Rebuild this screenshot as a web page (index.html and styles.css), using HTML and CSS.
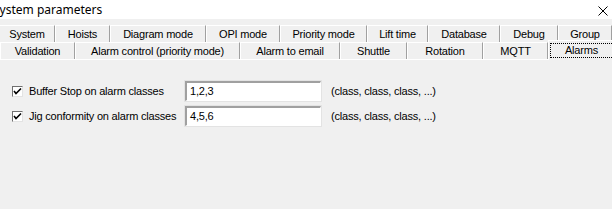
FILE: index.html
```html
<!DOCTYPE html>
<html>
    <head>
        <title>System parameters</title>
        <link rel="stylesheet" href="styles.css">
    </head>
    <body>
        <div class="titlebar">
            <span class="title">System parameters</span>
            <svg class="close" width="10" height="10" viewBox="0 0 10 10">
                <path d="M0.5 0.5 L9.5 9.5 M9.5 0.5 L0.5 9.5" stroke="#000" stroke-width="1" fill="none"/>
            </svg>
        </div>
        <div class="dialog">
            <div class="tabs">
                <div class="tab_row">
                    <div class="tab w55">System</div>
                    <div class="tab w55">Hoists</div>
                    <div class="tab w96">Diagram mode</div>
                    <div class="tab w74">OPI mode</div>
                    <div class="tab w87">Priority mode</div>
                    <div class="tab w61">Lift time</div>
                    <div class="tab w72">Database</div>
                    <div class="tab w58">Debug</div>
                    <div class="tab w54">Group</div>
                </div>
                <div class="tab_row">
                    <div class="tab w75">Validation</div>
                    <div class="tab w165">Alarm control (priority mode)</div>
                    <div class="tab w100">Alarm to email</div>
                    <div class="tab w67">Shuttle</div>
                    <div class="tab w76">Rotation</div>
                    <div class="tab w65">MQTT</div>
                    <div class="tab tab_sel w64"><span class="focus">Alarms</span></div>
                </div>
            </div>
            <div class="panel">
                <div class="field_row">
                    <label class="check_label"><span class="checkbox"><svg width="9" height="9" viewBox="0 0 9 9"><path d="M1 4 L3 6.5 L8 1.5" stroke="#000" stroke-width="1.6" fill="none"/></svg></span>Buffer Stop on alarm classes</label>
                    <div class="textbox">1,2,3</div>
                    <span class="hint">(class, class, class, ...)</span>
                </div>
                <div class="field_row">
                    <label class="check_label"><span class="checkbox"><svg width="9" height="9" viewBox="0 0 9 9"><path d="M1 4 L3 6.5 L8 1.5" stroke="#000" stroke-width="1.6" fill="none"/></svg></span>Jig conformity on alarm classes</label>
                    <div class="textbox">4,5,6</div>
                    <span class="hint">(class, class, class, ...)</span>
                </div>
            </div>
        </div>
    </body>
</html>
```

FILE: styles.css
```css
body {
	margin: 0;
	background: #f0f0f0;
	font-family: "Liberation Sans", Arial, sans-serif;
	font-size: 11px;
	letter-spacing: -0.2px;
	color: #000000;
	overflow: hidden;
}
.titlebar {
	display: flex;
	align-items: center;
	justify-content: space-between;
	height: 19px;
	background: #ffffff;
	padding: 0 4px 0 0;
	letter-spacing: 0;
}
.title {
	font-family: "Noto Sans", "Liberation Sans", sans-serif;
	font-size: 12px;
	margin-left: -7px;
	margin-top: -1px;
}
.close {
	margin-top: 2px;
	margin-right: 0;
}
.dialog {
	padding-top: 6px;
}
.tab_row {
	display: flex;
	height: 17px;
}
.tab {
	box-sizing: border-box;
	height: 17px;
	line-height: 17px;
	text-align: center;
	border-right: 1px solid #a0a0a0;
	border-left: 1px solid #ffffff;
	border-top: 1px solid #ffffff;
	white-space: nowrap;
}
.tab_row:first-child .tab:first-child {
	border-left: none;
}
.tab_sel {
	position: relative;
	top: -2px;
	height: 20px;
	line-height: 15px;
	border-right: none;
	background: #f0f0f0;
	z-index: 1;
}
.focus {
	display: block;
	margin: 2px 0 0 1px;
	height: 15px;
	line-height: 13px;
	border: 1px dotted #000000;
	border-right: none;
	box-sizing: border-box;
}
.tabs {
	border-bottom: 1px solid #ffffff;
}
.panel {
	padding: 21px 0 0 12px;
}
.field_row {
	display: flex;
	align-items: center;
	height: 20px;
	margin-bottom: 5px;
}
.check_label {
	display: flex;
	align-items: center;
	width: 173px;
}
.checkbox {
	box-sizing: border-box;
	width: 11px;
	height: 11px;
	border: 1px solid #707070;
	border-right-color: #e3e3e3;
	border-bottom-color: #e3e3e3;
	background: #ffffff;
	margin-right: 6px;
	display: flex;
	align-items: center;
	justify-content: center;
}
.textbox {
	box-sizing: border-box;
	width: 136px;
	height: 20px;
	line-height: 17px;
	padding-left: 3px;
	background: #ffffff;
	border: 1px solid #ffffff;
	border-top: 2px solid #a0a0a0;
	border-left: 2px solid #a0a0a0;
	outline: 1px solid #e3e3e3;
}
.hint {
	margin-left: 10px;
}
.w54 { width: 54px; }
.w55 { width: 55px; }
.w58 { width: 58px; }
.w61 { width: 61px; }
.w64 { width: 64px; }
.w65 { width: 65px; }
.w67 { width: 67px; }
.w72 { width: 72px; }
.w74 { width: 74px; }
.w75 { width: 75px; }
.w76 { width: 76px; }
.w87 { width: 87px; }
.w96 { width: 96px; }
.w100 { width: 100px; }
.w165 { width: 165px; }
```
